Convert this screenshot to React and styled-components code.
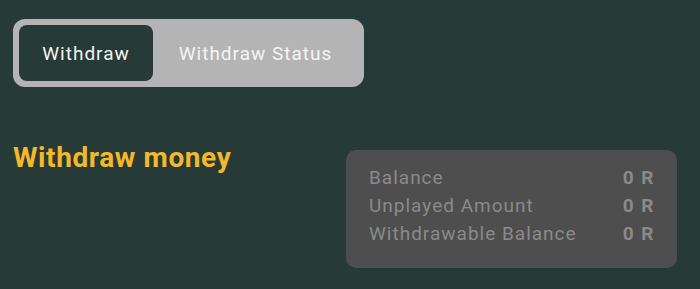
import styled, { createGlobalStyle } from 'styled-components';

const GlobalStyle = createGlobalStyle`
	body {
		margin: 0;
		background: #263a37;
		font-family: Roboto, 'Liberation Sans', sans-serif;
	}
`;

const Page = styled.div`
	padding: 19px 23px 0 13px;
	min-height: 289px;
	box-sizing: border-box;
`;

const Tabs = styled.div`
	display: inline-flex;
	width: 351px;
	height: 68px;
	box-sizing: border-box;
	padding: 6px;
	background: #b4b4b4;
	border-radius: 12px;
`;

const Tab = styled.button`
	border: none;
	padding: 0;
	font-family: inherit;
	font-size: 19px;
	letter-spacing: 1px;
	color: #f4f4f4;
	border-radius: 8px;
	cursor: pointer;
	width: ${(p) => p.$w}px;
	background: ${(p) => (p.$active ? '#263a37' : 'transparent')};
`;

const Row = styled.div`
	display: flex;
	justify-content: space-between;
	align-items: flex-start;
	margin-top: 54px;
`;

const Heading = styled.h2`
	margin: 0;
	color: #f4b829;
	font-size: 28px;
	font-weight: 700;
	letter-spacing: 0.6px;
	line-height: 34px;
`;

const Card = styled.div`
	margin-top: 9px;
	width: 331px;
	height: 118px;
	box-sizing: border-box;
	padding: 14px 22px 0 23px;
	background: #4e4e4e;
	border-radius: 10px;
`;

const Line = styled.div`
	display: flex;
	justify-content: space-between;
	color: #8a8a8a;
	font-size: 19px;
	letter-spacing: 1px;
	line-height: 28px;
`;

const Value = styled.span`
	font-weight: 700;
	letter-spacing: 1.5px;
`;

const rows = [
	['Balance', '0 R'],
	['Unplayed Amount', '0 R'],
	['Withdrawable Balance', '0 R'],
];

export default function App() {
	return (
		<>
			<GlobalStyle />
			<Page>
				<Tabs>
					<Tab $active $w={134}>Withdraw</Tab>
					<Tab $w={205}>Withdraw Status</Tab>
				</Tabs>
				<Row>
					<Heading>Withdraw money</Heading>
					<Card>
						{rows.map(([label, value]) => (
							<Line key={label}>
								<span>{label}</span>
								<Value>{value}</Value>
							</Line>
						))}
					</Card>
				</Row>
			</Page>
		</>
	);
}
